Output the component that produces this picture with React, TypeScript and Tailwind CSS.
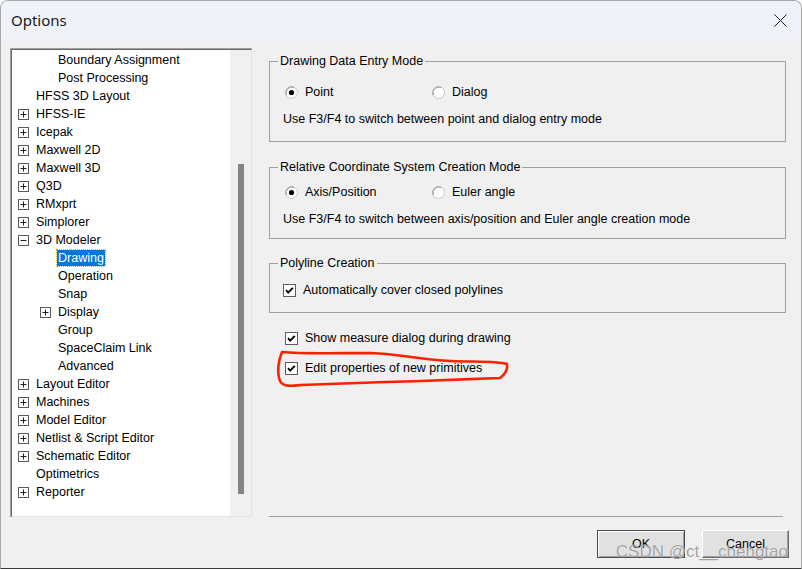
import React from "react";

type TreeNode = {
  label: string;
  level: 1 | 2;
  exp?: "+" | "-";
  selected?: boolean;
};

const nodes: TreeNode[] = [
  { label: "Boundary Assignment", level: 2 },
  { label: "Post Processing", level: 2 },
  { label: "HFSS 3D Layout", level: 1 },
  { label: "HFSS-IE", level: 1, exp: "+" },
  { label: "Icepak", level: 1, exp: "+" },
  { label: "Maxwell 2D", level: 1, exp: "+" },
  { label: "Maxwell 3D", level: 1, exp: "+" },
  { label: "Q3D", level: 1, exp: "+" },
  { label: "RMxprt", level: 1, exp: "+" },
  { label: "Simplorer", level: 1, exp: "+" },
  { label: "3D Modeler", level: 1, exp: "-" },
  { label: "Drawing", level: 2, selected: true },
  { label: "Operation", level: 2 },
  { label: "Snap", level: 2 },
  { label: "Display", level: 2, exp: "+" },
  { label: "Group", level: 2 },
  { label: "SpaceClaim Link", level: 2 },
  { label: "Advanced", level: 2 },
  { label: "Layout Editor", level: 1, exp: "+" },
  { label: "Machines", level: 1, exp: "+" },
  { label: "Model Editor", level: 1, exp: "+" },
  { label: "Netlist & Script Editor", level: 1, exp: "+" },
  { label: "Schematic Editor", level: 1, exp: "+" },
  { label: "Optimetrics", level: 1 },
  { label: "Reporter", level: 1, exp: "+" },
];

function Expander({ kind }: { kind: "+" | "-" }) {
  return (
    <svg width="11" height="11" viewBox="0 0 11 11" className="block">
      <rect x="0.5" y="0.5" width="10" height="10" fill="#fff" stroke="#5a5a5a" />
      <line x1="2.5" y1="5.5" x2="8.5" y2="5.5" stroke="#1e1e1e" />
      {kind === "+" && <line x1="5.5" y1="2.5" x2="5.5" y2="8.5" stroke="#1e1e1e" />}
    </svg>
  );
}

function TreeRow({ node }: { node: TreeNode }) {
  return (
    <div className={`flex h-[18px] items-center ${node.level === 1 ? "pl-[6px]" : "pl-[28px]"}`}>
      <div className="w-[18px] shrink-0">{node.exp && <Expander kind={node.exp} />}</div>
      {node.selected ? (
        <span className="-ml-[1px] bg-[#0078d7] px-[1px] leading-[16px] text-white outline-1 outline-dotted outline-[#e8a33a]">
          {node.label}
        </span>
      ) : (
        <span className="whitespace-nowrap">{node.label}</span>
      )}
    </div>
  );
}

function Radio({ checked }: { checked?: boolean }) {
  return (
    <svg width="13" height="13" viewBox="0 0 13 13" className="block shrink-0">
      <circle cx="6.5" cy="6.5" r="6" fill="#fff" stroke="#c9c9c9" />
      <path d="M1.3 9 A6 6 0 0 1 9 1.3" fill="none" stroke="#8a8a8a" />
      {checked && <circle cx="6.5" cy="6.5" r="2.6" fill="#000" />}
    </svg>
  );
}

function Check() {
  return (
    <svg width="13" height="13" viewBox="0 0 13 13" className="block shrink-0">
      <rect x="0.5" y="0.5" width="12" height="12" fill="#fff" stroke="#5c5c5c" />
      <path d="M3 6.2 L5.2 8.6 L9.8 3.8" fill="none" stroke="#000" strokeWidth="1.8" />
    </svg>
  );
}

export default function App() {
  return (
    <div className="relative flex h-[569px] w-[802px] flex-col overflow-hidden rounded-t-[8px] border border-[#a8a8a8] border-b-[#3a3a3a] bg-[#f0f0f0] font-['Liberation_Sans',Arial,sans-serif] text-[12.5px] text-black">
      {/* title bar */}
      <div className="flex h-[39px] shrink-0 items-center justify-between bg-[#eff3f9] pl-[10px] pr-[14px]">
        <span className="font-['Noto_Sans',sans-serif] text-[15px] text-[#1a1a1a]">Options</span>
        <svg width="13" height="13" viewBox="0 0 13 13">
          <path d="M0.5 0.5 L12.5 12.5 M12.5 0.5 L0.5 12.5" stroke="#1a1a1a" strokeWidth="1" />
        </svg>
      </div>

      <div className="flex flex-1 flex-col pl-[9px]">
        <div className="mt-[8px] flex h-[469px]">
          {/* tree */}
          <div className="flex w-[242px] shrink-0 border-t border-l border-[#a0a0a0] border-r-white border-b-white">
            <div className="flex flex-1 border-t border-l border-[#696969] border-r border-b border-r-[#e3e3e3] border-b-[#e3e3e3]">
              <div className="w-[218px] bg-white pt-[1px]">
                {nodes.map((n) => (
                  <TreeRow key={n.label} node={n} />
                ))}
              </div>
              <div className="flex flex-1 justify-center bg-[#f0f0f0] pt-[114px]">
                <div className="ml-[1px] h-[330px] w-[6px] bg-[#858585]" />
              </div>
            </div>
          </div>

          {/* right panel */}
          <div className="ml-[17px] flex w-[517px] flex-col">
            <fieldset className="mt-[6px] border border-[#a0a0a0] pb-[13px]">
              <legend className="ml-[8px] px-[2px] leading-[15px]">Drawing Data Entry Mode</legend>
              <div className="mt-[14px] flex h-[18px] items-center pl-[15px]">
                <div className="flex w-[147px] items-center gap-[7px]">
                  <Radio checked />
                  <span>Point</span>
                </div>
                <div className="flex items-center gap-[7px]">
                  <Radio />
                  <span>Dialog</span>
                </div>
              </div>
              <div className="mt-[9px] flex h-[18px] items-center pl-[13px]">
                Use F3/F4 to switch between point and dialog entry mode
              </div>
            </fieldset>

            <fieldset className="mt-[18px] border border-[#a0a0a0] pb-[10px]">
              <legend className="ml-[8px] px-[2px] leading-[15px]">Relative Coordinate System Creation Mode</legend>
              <div className="mt-[8px] flex h-[18px] items-center pl-[15px]">
                <div className="flex w-[147px] items-center gap-[7px]">
                  <Radio checked />
                  <span>Axis/Position</span>
                </div>
                <div className="flex items-center gap-[7px]">
                  <Radio />
                  <span>Euler angle</span>
                </div>
              </div>
              <div className="mt-[9px] flex h-[18px] items-center pl-[13px]">
                Use F3/F4 to switch between axis/position and Euler angle creation mode
              </div>
            </fieldset>

            <fieldset className="mt-[17px] border border-[#a0a0a0] pb-[13px]">
              <legend className="ml-[8px] px-[2px] leading-[15px]">Polyline Creation</legend>
              <div className="mt-[10px] flex h-[18px] items-center gap-[7px] pl-[13px]">
                <Check />
                <span>Automatically cover closed polylines</span>
              </div>
            </fieldset>

            <div className="mt-[16px] flex h-[18px] items-center gap-[7px] pl-[16px]">
              <Check />
              <span>Show measure dialog during drawing</span>
            </div>
            <div className="mt-[12px] flex h-[18px] items-center gap-[7px] pl-[16px]">
              <Check />
              <span>Edit properties of new primitives</span>
            </div>

            <div className="mt-auto mr-[3px] border-t border-[#a0a0a0]" />
          </div>
        </div>

        {/* buttons */}
        <div className="mt-[13px] flex justify-end gap-[17px] pr-[12px]">
          <button className="flex h-[28px] w-[88px] items-center justify-center border border-[#4a4a4a] bg-[#e1e1e1] shadow-[inset_1px_1px_0_#fff,inset_-1px_-1px_0_#a0a0a0]">
            OK
          </button>
          <button className="flex h-[28px] w-[87px] items-center justify-center border border-t-white border-l-white border-r-[#696969] border-b-[#696969] bg-[#e1e1e1] shadow-[inset_-1px_-1px_0_#a0a0a0]">
            Cancel
          </button>
        </div>
      </div>

      {/* red annotation */}
      <svg className="pointer-events-none absolute left-0 top-0" width="802" height="569">
        <path
          d="M281 351 C 300 353, 340 352, 370 352 C 400 353, 420 359, 450 360 C 475 361, 495 360, 506 363 C 507 369, 503 374, 499 377 C 470 378, 450 379, 420 380 C 380 381, 330 383, 300 384 C 290 385, 282 386, 279 380 C 276 372, 277 360, 281 351 Z"
          fill="none"
          stroke="#ff2000"
          strokeWidth="2.6"
          strokeLinejoin="round"
        />
      </svg>

      {/* watermark */}
      <div className="pointer-events-none absolute bottom-[8px] right-[13px] font-['Liberation_Sans',Arial,sans-serif] text-[17px] leading-none text-[#7a7a7a]/70 [text-shadow:0_0_1px_#fff]">
        CSDN @ct__chengtao
      </div>
    </div>
  );
}
